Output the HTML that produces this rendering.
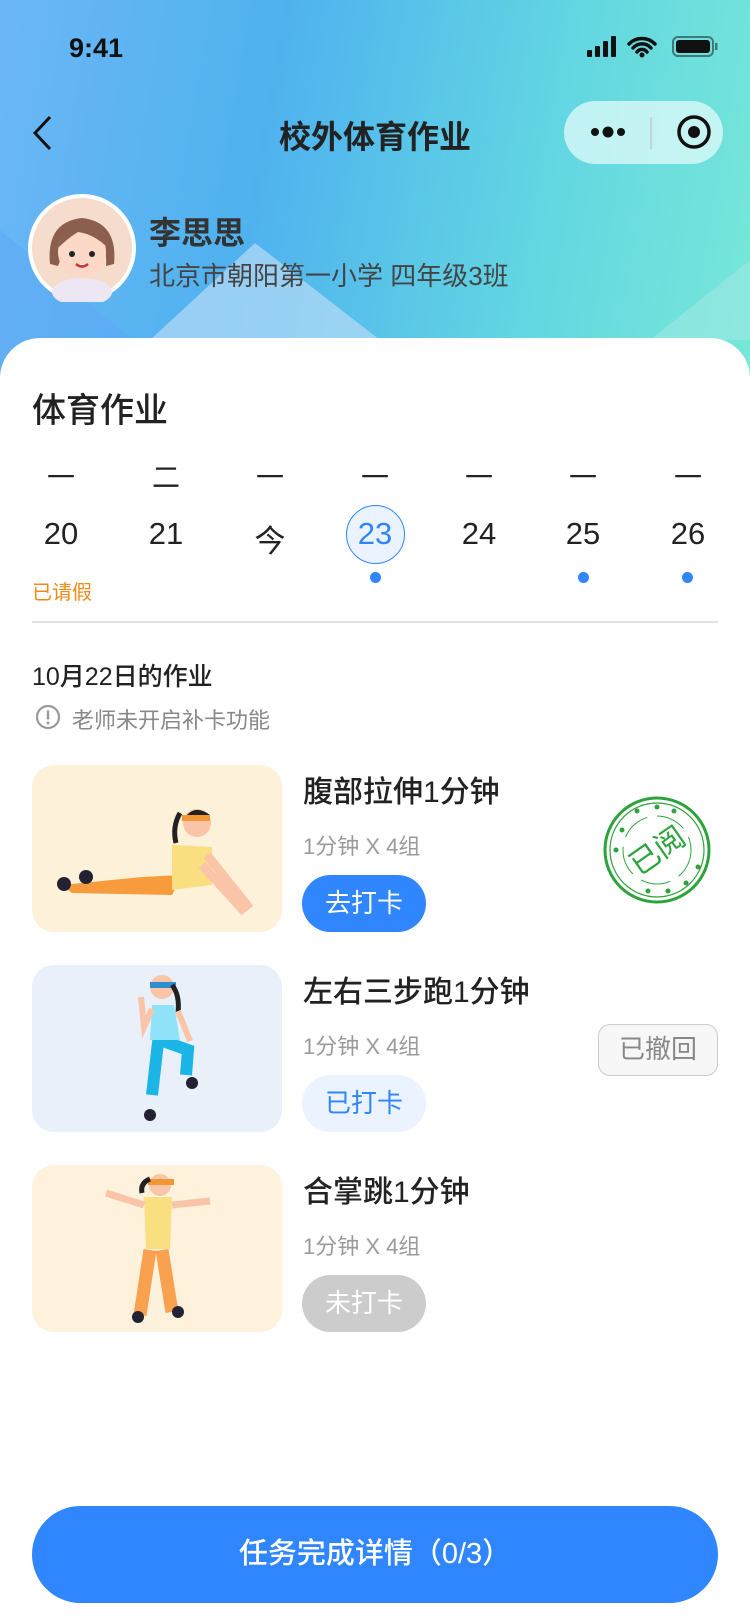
<!DOCTYPE html>
<html><head><meta charset="utf-8"><style>
*{margin:0;padding:0;box-sizing:border-box}
body{width:750px;height:1624px;overflow:hidden;font-family:"Liberation Sans","Noto Sans CJK SC",sans-serif;background:#fff;position:relative}
.hdr{position:absolute;left:0;top:0;width:750px;height:420px;background:linear-gradient(100deg,#6cb6f6 0%,#4fb2ef 35%,#62d6e2 70%,#78e8d8 100%)}
.abs{position:absolute}
.card{position:absolute;left:0;top:338px;width:750px;height:1286px;background:#fff;border-radius:40px 40px 0 0}
.t{position:absolute;white-space:nowrap}
.wd{position:absolute;width:60px;text-align:center;font-size:28px;color:#222}
.dt{position:absolute;width:70px;text-align:center;font-size:31px;color:#222}
.dot{position:absolute;width:11px;height:11px;border-radius:50%;background:#2f86ff}
.img{position:absolute;left:32px;width:250px;height:167px;border-radius:22px;overflow:hidden}
.ttl{position:absolute;left:303px;font-size:30px;color:#222;font-weight:500}
.sub{position:absolute;left:303px;font-size:22px;color:#9a9a9a}
.btn{position:absolute;left:302px;width:124px;height:57px;border-radius:29px;font-size:26px;text-align:center;line-height:57px}
</style></head><body>
<div class="hdr">
<svg class="abs" style="left:0;top:0" width="750" height="420"><polygon points="0,230 0,420 230,420" fill="#5ea7f5" opacity=".5"/><polygon points="150,340 255,243 380,340" fill="#b8dcf7" opacity=".7"/><polygon points="650,340 750,260 750,340" fill="#a6eae6" opacity=".5"/></svg>
</div>
<div class="t" style="left:69px;top:33px;font-size:27px;font-weight:bold;color:#111">9:41</div>
<svg class="abs" style="left:587px;top:35px" width="140" height="26"><rect x="0" y="15" width="5" height="7" rx="1" fill="#111"/><rect x="8" y="11" width="5" height="11" rx="1" fill="#111"/><rect x="16" y="6" width="5" height="16" rx="1" fill="#111"/><rect x="24" y="1" width="5" height="21" rx="1" fill="#111"/><path d="M42 9a18 18 0 0 1 26 0M46 13a12 12 0 0 1 18 0M50 17a6 6 0 0 1 10 0" stroke="#111" stroke-width="3.5" fill="none" stroke-linecap="round"/><circle cx="55" cy="20" r="2.5" fill="#111"/><rect x="86" y="2" width="40" height="19" rx="5" fill="none" stroke="#111" stroke-width="2" opacity=".5"/><rect x="89" y="5" width="34" height="13" rx="3" fill="#111"/><rect x="128" y="8" width="2.5" height="7" fill="#111" opacity=".5"/></svg>
<svg class="abs" style="left:30px;top:114px" width="24" height="38"><path d="M20 3L5 19l15 16" stroke="#111" stroke-width="3" fill="none"/></svg>
<div class="t" style="left:0;width:750px;text-align:center;top:112px;font-size:32px;font-weight:bold;color:#222">校外体育作业</div>
<div class="abs" style="left:564px;top:101px;width:159px;height:63px;border-radius:32px;background:rgba(220,250,248,.78)"></div>
<svg class="abs" style="left:590px;top:114px" width="125" height="40"><circle cx="5" cy="18" r="4" fill="#111"/><circle cx="18" cy="18" r="5.5" fill="#111"/><circle cx="31" cy="18" r="4" fill="#111"/><line x1="61" y1="3" x2="61" y2="35" stroke="#bbb" stroke-width="1"/><circle cx="104" cy="18" r="15" fill="none" stroke="#111" stroke-width="3.5"/><circle cx="104" cy="18" r="6" fill="#111"/></svg>
<svg class="abs" style="left:28px;top:194px" width="108" height="108"><circle cx="54" cy="54" r="54" fill="#fff"/><circle cx="54" cy="54" r="50" fill="#f6dccd"/><ellipse cx="54" cy="98" rx="30" ry="14" fill="#ece7f3"/><path d="M22 70Q18 28 54 24Q90 28 86 70L78 72Q80 44 60 38Q40 44 30 72Z" fill="#8c5e4d"/><ellipse cx="54" cy="58" rx="24" ry="26" fill="#fbd9c6"/><path d="M30 54Q36 30 56 32Q76 32 80 54Q66 40 50 38Q40 44 30 54Z" fill="#8c5e4d"/><circle cx="44" cy="60" r="3" fill="#222"/><circle cx="64" cy="60" r="3" fill="#222"/><path d="M48 70q6 5 12 0" stroke="#c33" stroke-width="2.5" fill="#fff"/></svg>
<div class="t" style="left:149px;top:208px;font-size:32px;font-weight:bold;color:#333">李思思</div>
<div class="t" style="left:149px;top:256px;font-size:26px;color:#444">北京市朝阳第一小学 四年级3班</div>
<div class="card"></div>
<div class="t" style="left:32px;top:383px;font-size:34px;font-weight:500;color:#222">体育作业</div>
<div class="wd" style="left:31px;top:456px">一</div><div class="wd" style="left:136px;top:456px">二</div><div class="wd" style="left:240px;top:456px">一</div><div class="wd" style="left:345px;top:456px">一</div><div class="wd" style="left:449px;top:456px">一</div><div class="wd" style="left:553px;top:456px">一</div><div class="wd" style="left:658px;top:456px">一</div>
<div class="abs" style="left:346px;top:505px;width:59px;height:59px;border-radius:50%;border:1.5px solid #2f86ff;background:#eaf3ff"></div>
<div class="dt" style="left:26px;top:516px">20</div><div class="dt" style="left:131px;top:516px">21</div><div class="dt" style="left:235px;top:516px">今</div><div class="dt" style="left:340px;top:516px;color:#2f86ff">23</div><div class="dt" style="left:444px;top:516px">24</div><div class="dt" style="left:548px;top:516px">25</div><div class="dt" style="left:653px;top:516px">26</div>
<div class="t" style="left:32px;top:576px;font-size:20px;color:#f08a18">已请假</div>
<div class="dot" style="left:370px;top:572px"></div><div class="dot" style="left:578px;top:572px"></div><div class="dot" style="left:682px;top:572px"></div>
<div class="abs" style="left:32px;top:621px;width:686px;height:2px;background:#e3e3e3"></div>
<div class="t" style="left:32px;top:657px;font-size:25px;font-weight:500;color:#222">10月22日的作业</div>
<svg class="abs" style="left:35px;top:704px" width="26" height="26"><circle cx="13" cy="13" r="11" fill="none" stroke="#999" stroke-width="2.2"/><rect x="11.8" y="6.5" width="2.4" height="9" fill="#999"/><circle cx="13" cy="19" r="1.5" fill="#999"/></svg>
<div class="t" style="left:72px;top:703px;font-size:22px;color:#888">老师未开启补卡功能</div>

<div class="img" style="top:765px;background:#fdf1d9"><svg width="250" height="167"><path d="M30 120L110 112L150 110L140 130L40 128Z" fill="#f89b3c"/><path d="M140 80L180 82L180 120L140 125Z" fill="#f9df7f"/><path d="M175 90L215 140L210 144L170 100" stroke="#f9c4a8" stroke-width="9" fill="none"/><circle cx="165" cy="58" r="14" fill="#f9c4a8"/><path d="M152 54q10-16 26-4" fill="#222"/><rect x="150" y="50" width="28" height="6" fill="#f39733"/><path d="M148 48q-8 14-4 30" stroke="#222" stroke-width="5" fill="none"/><circle cx="32" cy="119" r="7" fill="#223"/><circle cx="54" cy="112" r="7" fill="#223"/></svg></div>
<div class="ttl" style="top:767px">腹部拉伸1分钟</div>
<div class="sub" style="top:829px">1分钟 X 4组</div>
<div class="btn" style="top:875px;background:#2f86ff;color:#fff">去打卡</div>
<svg class="abs" style="left:602px;top:795px" width="110" height="110"><circle cx="55" cy="55" r="52" fill="none" stroke="#2da33b" stroke-width="3"/><circle cx="55" cy="55" r="47" fill="none" stroke="#2da33b" stroke-width="1.2"/><circle cx="55" cy="55" r="34" fill="none" stroke="#2da33b" stroke-width="1" stroke-dasharray="30 10"/><text x="55" y="66" font-size="30" fill="#2da33b" text-anchor="middle" transform="rotate(-35 55 55)" font-family="Noto Sans CJK SC,sans-serif">已阅</text><g fill="#2da33b"><circle cx="35" cy="16" r="2.5"/><circle cx="55" cy="12" r="2.5"/><circle cx="72" cy="16" r="2.5"/><circle cx="20" cy="35" r="2.5"/><circle cx="14" cy="55" r="2.5"/><circle cx="96" cy="72" r="2.5"/><circle cx="84" cy="88" r="2.5"/><circle cx="66" cy="96" r="2.5"/><circle cx="46" cy="96" r="2.5"/></g></svg>

<div class="img" style="top:965px;background:#e9f0fa"><svg width="250" height="167"><path d="M128 60l-8 70" stroke="#1cb6e6" stroke-width="12"/><path d="M128 75l28 10l-2 25" stroke="#1cb6e6" stroke-width="12" fill="none"/><path d="M120 40h22l6 35h-30z" fill="#8fe2f8"/><circle cx="130" cy="22" r="12" fill="#f9c4a8"/><rect x="118" y="17" width="26" height="6" fill="#2e8fd0"/><path d="M140 20q8 10 6 28" stroke="#222" stroke-width="5" fill="none"/><path d="M120 44l-8 18l-3-30" stroke="#f9c4a8" stroke-width="6" fill="none"/><path d="M146 46l12 30" stroke="#f9c4a8" stroke-width="6"/><circle cx="118" cy="150" r="6" fill="#223"/><circle cx="160" cy="118" r="6" fill="#223"/></svg></div>
<div class="ttl" style="top:967px">左右三步跑1分钟</div>
<div class="sub" style="top:1029px">1分钟 X 4组</div>
<div class="btn" style="top:1075px;background:#eaf3ff;color:#2f86ff">已打卡</div>
<div class="abs" style="left:598px;top:1024px;width:120px;height:52px;border-radius:12px;border:1.5px solid #ccc;background:#f7f7f7;font-size:26px;color:#888;text-align:center;line-height:49px">已撤回</div>

<div class="img" style="top:1165px;background:#fef2dc"><svg width="250" height="167"><path d="M118 85l-10 65M130 85l10 62" stroke="#f9a14f" stroke-width="13"/><path d="M112 32h28l-2 52h-24z" fill="#f9df7f"/><path d="M112 40l-38-12M140 40l38-4" stroke="#f9c4a8" stroke-width="7"/><circle cx="128" cy="20" r="11" fill="#f9c4a8"/><rect x="116" y="14" width="26" height="6" fill="#f39733"/><path d="M118 14q-10 4-8 14" stroke="#222" stroke-width="5" fill="none"/><circle cx="106" cy="152" r="6" fill="#223"/><circle cx="146" cy="147" r="6" fill="#223"/></svg></div>
<div class="ttl" style="top:1167px">合掌跳1分钟</div>
<div class="sub" style="top:1229px">1分钟 X 4组</div>
<div class="btn" style="top:1275px;background:#cccccc;color:#fff">未打卡</div>

<div class="abs" style="left:32px;top:1506px;width:686px;height:97px;border-radius:49px;background:#2f86ff;color:#fff;font-size:29px;text-align:center;line-height:97px;font-weight:500">任务完成详情（0/3）</div>
</body></html>
